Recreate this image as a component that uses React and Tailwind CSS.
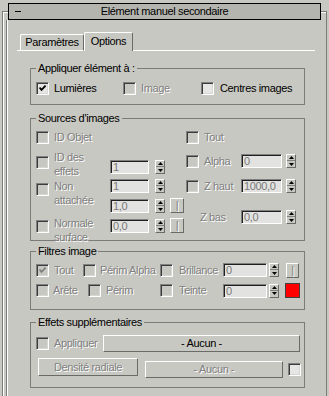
import React from "react";

function CB({ checked = false, disabled = false, className = "" }) {
  return (
    <span
      className={
        "shrink-0 w-[13px] h-[13px] border border-t-[#808080] border-l-[#808080] border-b-white border-r-white shadow-[inset_1px_1px_0_#3c3c3c,inset_-1px_-1px_0_#d6d6d2] flex items-center justify-center " +
        (disabled ? "bg-[#c8c8c2] " : "bg-[#e6e6e4] ") +
        className
      }
    >
      {checked && (
        <svg width="7" height="7" viewBox="0 0 7 7">
          <path d="M0.5 2.5 L2.5 4.8 L6.6 0.6" stroke={disabled ? "#808080" : "#000"} strokeWidth="1.8" fill="none" />
        </svg>
      )}
    </span>
  );
}

function T({ children, disabled = false, className = "" }) {
  return (
    <span className={(disabled ? "text-[#808080] [text-shadow:1px_1px_0_#ffffff] " : "text-black ") + className}>
      {children}
    </span>
  );
}

function Arrows({ className = "" }) {
  return (
    <div
      className={
        "shrink-0 w-[10px] h-[14px] border border-t-white border-l-white border-b-[#6a6a66] border-r-[#6a6a66] flex flex-col items-center " +
        className
      }
    >
      <div className="h-[5px] flex items-center justify-center">
        <svg width="5" height="3" viewBox="0 0 5 3">
          <path d="M2.5 0 L5 3 L0 3 Z" fill="#000" />
        </svg>
      </div>
      <div className="w-full h-px bg-[#808080]" />
      <div className="h-[6px] flex items-center justify-center">
        <svg width="5" height="3" viewBox="0 0 5 3">
          <path d="M0 0 L5 0 L2.5 3 Z" fill="#000" />
        </svg>
      </div>
    </div>
  );
}

function Field({ v, className = "" }) {
  return (
    <div
      className={
        "shrink-0 h-[14px] border border-t-[#808080] border-l-[#808080] border-b-white border-r-white shadow-[inset_1px_1px_0_#202020] bg-[#e2e2e0] text-[#7a7a7a] pl-[2px] leading-[12px] whitespace-nowrap overflow-hidden " +
        className
      }
    >
      {v}
    </div>
  );
}

function Btn({ children, disabled = false, className = "" }) {
  return (
    <div
      className={
        "shrink-0 border border-t-white border-l-white border-b-[#6a6a66] border-r-[#6a6a66] flex items-center justify-center whitespace-nowrap " +
        className
      }
    >
      <T disabled={disabled}>{children}</T>
    </div>
  );
}

function Group({ title, className = "", children }) {
  return (
    <fieldset className={"border border-[#7b7b77] p-0 " + className}>
      <legend className="ml-[5px] px-[2px] leading-[13px]">{title}</legend>
      {children}
    </fieldset>
  );
}

export default function App() {
  return (
    <div className="w-[329px] h-[396px] bg-[#c8c8c2] overflow-hidden font-['Liberation_Sans',Arial,sans-serif] text-[11px] leading-[13px] tracking-[-0.35px] text-black">
      <div className="ml-[2px] mt-[11px] w-[325px] h-[385px] border-t border-l border-r border-[#7b7b77] shadow-[inset_1px_1px_0_#ffffff] flex flex-col">
        {/* title bar */}
        <div className="-mt-[9px] mx-[5px] h-[17px] border border-black bg-[#b4b5af] grid grid-cols-[20px_1fr_20px] items-center">
          <div className="pl-[6px] flex items-center">
            <span className="w-[6px] h-px bg-black" />
          </div>
          <div className="text-center">Elément manuel secondaire</div>
          <div />
        </div>

        <div className="flex-1 flex">
          {/* inner left edge */}
          <div className="ml-[3px] w-[2px] border-l border-[#7b7b77] bg-transparent shadow-[inset_1px_0_0_#ffffff]" />

          <div className="flex flex-col">
            {/* tabs */}
            <div className="mt-[12px] ml-[9px] w-[298px] h-[19px] flex items-end">
              <div className="w-[3px] h-full border-b border-white" />
              <div className="w-[64px] h-[17px] border-t border-l border-white border-r border-r-[#6a6a66] border-b border-b-white rounded-t-[2px] flex items-center justify-center">
                Paramètres
              </div>
              <div className="w-[49px] h-[19px] border-t border-l border-white border-r border-r-[#6a6a66] rounded-t-[2px] flex items-center justify-center pb-[1px]">
                Options
              </div>
              <div className="flex-1 h-full border-b border-white" />
            </div>

            {/* groups */}
            <div className="ml-[22px] w-[275px] flex flex-col">
              <Group title="Appliquer élément à :" className="mt-[11px]">
                <div className="h-[29px] pl-[5px] pt-[7px]">
                  <div className="flex items-center h-[13px]">
                    <div className="w-[87px] flex items-center">
                      <CB checked />
                      <T className="ml-[5px]">Lumières</T>
                    </div>
                    <div className="w-[78px] flex items-center">
                      <CB disabled />
                      <T disabled className="ml-[5px]">Image</T>
                    </div>
                    <div className="flex items-center">
                      <CB />
                      <T className="ml-[6px]">Centres images</T>
                    </div>
                  </div>
                </div>
              </Group>

              <Group title="Sources d'images" className="mt-[7px]">
                <div className="h-[115px] pl-[5px] flex">
                  {/* left column */}
                  <div className="w-[148px] flex flex-col">
                    <div className="mt-[6px] h-[13px] flex items-center">
                      <CB disabled />
                      <T disabled className="ml-[5px]">ID Objet</T>
                    </div>
                    <div className="mt-[6px] h-[26px] flex">
                      <CB disabled className="mt-[6px]" />
                      <T disabled className="ml-[5px] w-[56px] leading-[14px]">ID des<br />effets</T>
                      <div className="mt-[10px] flex">
                        <Field v="1" className="w-[39px]" />
                        <Arrows className="ml-[6px]" />
                      </div>
                    </div>
                    <div className="mt-[3px] h-[34px] flex">
                      <CB disabled className="mt-[4px]" />
                      <T disabled className="ml-[5px] w-[56px] leading-[14px]">Non<br />attachée</T>
                      <div className="flex flex-col">
                        <div className="flex">
                          <Field v="1" className="w-[39px]" />
                          <Arrows className="ml-[6px]" />
                        </div>
                        <div className="mt-[6px] flex items-start">
                          <Field v="1,0" className="w-[39px]" />
                          <Arrows className="ml-[6px]" />
                          <Btn disabled className="ml-[5px] -mt-[1px] w-[14px] h-[15px]">|</Btn>
                        </div>
                      </div>
                    </div>
                    <div className="mt-[3px] flex">
                      <CB disabled className="mt-[4px]" />
                      <T disabled className="ml-[5px] w-[56px] leading-[14px]">Normale<br />surface</T>
                      <div className="mt-[3px] flex items-start">
                        <Field v="0,0" className="w-[39px]" />
                        <Arrows className="ml-[6px]" />
                        <Btn disabled className="ml-[5px] -mt-[1px] w-[14px] h-[15px]">|</Btn>
                      </div>
                    </div>
                  </div>
                  {/* right column */}
                  <div className="ml-[2px] flex flex-col">
                    <div className="mt-[6px] h-[13px] flex items-center">
                      <CB disabled />
                      <T disabled className="ml-[5px]">Tout</T>
                    </div>
                    <div className="mt-[10px] h-[14px] flex items-center">
                      <CB disabled />
                      <T disabled className="ml-[5px] w-[37px]">Alpha</T>
                      <Field v="0" className="w-[41px]" />
                      <Arrows className="ml-[4px]" />
                    </div>
                    <div className="mt-[11px] h-[14px] flex items-center">
                      <CB disabled />
                      <T disabled className="ml-[5px] w-[37px]">Z haut</T>
                      <Field v="1000,0" className="w-[41px]" />
                      <Arrows className="ml-[4px]" />
                    </div>
                    <div className="mt-[17px] h-[14px] flex items-center">
                      <T disabled className="ml-[14px] w-[41px]">Z bas</T>
                      <Field v="0,0" className="w-[41px]" />
                      <Arrows className="ml-[4px]" />
                    </div>
                  </div>
                </div>
              </Group>

              <Group title="Filtres image" className="mt-[4px]">
                <div className="h-[46px] pl-[5px]">
                  <div className="mt-[5px] h-[14px] flex items-center">
                    <CB checked disabled />
                    <T disabled className="ml-[5px] w-[29px]">Tout</T>
                    <CB disabled />
                    <T disabled className="ml-[4px] w-[60px]">Périm Alpha</T>
                    <CB disabled />
                    <T disabled className="ml-[6px] w-[44px]">Brillance</T>
                    <Field v="0" className="w-[44px]" />
                    <Arrows className="ml-[2px]" />
                    <Btn disabled className="ml-[7px] w-[13px] h-[15px]">|</Btn>
                  </div>
                  <div className="mt-[6px] h-[15px] flex items-center">
                    <CB disabled />
                    <T disabled className="ml-[4px] w-[35px]">Arête</T>
                    <CB disabled />
                    <T disabled className="ml-[5px] w-[54px]">Périm</T>
                    <CB disabled />
                    <T disabled className="ml-[6px] w-[44px]">Teinte</T>
                    <Field v="0" className="w-[44px]" />
                    <Arrows className="ml-[2px]" />
                    <div className="ml-[6px] w-[15px] h-[15px] border border-[#404040] bg-[#ff0000]" />
                  </div>
                </div>
              </Group>

              <Group title="Effets supplémentaires" className="mt-[6px]">
                <div className="h-[52px] pl-[5px]">
                  <div className="mt-[6px] h-[17px] flex items-center">
                    <CB disabled />
                    <T disabled className="ml-[5px] w-[44px]">Appliquer</T>
                    <Btn className="ml-[5px] w-[197px] h-[17px]">- Aucun -</Btn>
                  </div>
                  <div className="mt-[6px] flex items-start">
                    <Btn disabled className="ml-[2px] w-[100px] h-[18px]">Densité radiale</Btn>
                    <Btn disabled className="ml-[7px] mt-[3px] w-[138px] h-[17px]">- Aucun -</Btn>
                    <CB className="ml-[5px] mt-[5px]" />
                  </div>
                </div>
              </Group>
            </div>
          </div>
        </div>
      </div>
    </div>
  );
}
